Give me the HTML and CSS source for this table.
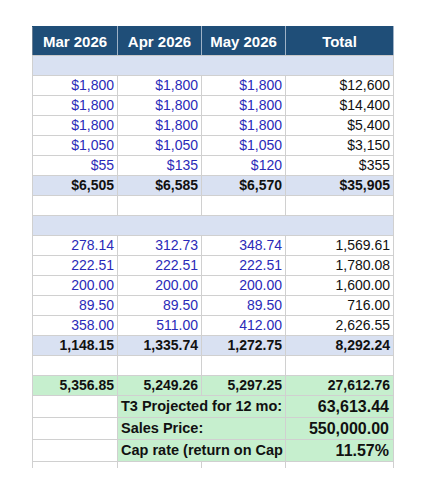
FILE: index.html
```html
<!DOCTYPE html>
<html lang="en">
<head>
  <meta charset="UTF-8">
  <title>Cash Flow Summary</title>
  <meta name="viewport" content="width=device-width, initial-scale=1.0">
  <link rel="stylesheet" href="styles.css">
</head>
<body>
<div class="sheet">
  <table class="grid">
    <colgroup>
      <col class="c-month">
      <col class="c-month2">
      <col class="c-month2">
      <col class="c-total">
    </colgroup>
    <thead>
      <tr>
        <th>Mar 2026</th>
        <th>Apr 2026</th>
        <th>May 2026</th>
        <th>Total</th>
      </tr>
    </thead>
    <tbody>
      <tr class="band"><td colspan="4"></td></tr>
      <tr><td class="in">$1,800</td><td class="in">$1,800</td><td class="in">$1,800</td><td>$12,600</td></tr>
      <tr><td class="in">$1,800</td><td class="in">$1,800</td><td class="in">$1,800</td><td>$14,400</td></tr>
      <tr><td class="in">$1,800</td><td class="in">$1,800</td><td class="in">$1,800</td><td>$5,400</td></tr>
      <tr><td class="in">$1,050</td><td class="in">$1,050</td><td class="in">$1,050</td><td>$3,150</td></tr>
      <tr><td class="in">$55</td><td class="in">$135</td><td class="in">$120</td><td>$355</td></tr>
      <tr class="sum"><td>$6,505</td><td>$6,585</td><td>$6,570</td><td>$35,905</td></tr>
      <tr><td></td><td></td><td></td><td></td></tr>
      <tr class="band"><td colspan="4"></td></tr>
      <tr><td class="in">278.14</td><td class="in">312.73</td><td class="in">348.74</td><td>1,569.61</td></tr>
      <tr><td class="in">222.51</td><td class="in">222.51</td><td class="in">222.51</td><td>1,780.08</td></tr>
      <tr><td class="in">200.00</td><td class="in">200.00</td><td class="in">200.00</td><td>1,600.00</td></tr>
      <tr><td class="in">89.50</td><td class="in">89.50</td><td class="in">89.50</td><td>716.00</td></tr>
      <tr><td class="in">358.00</td><td class="in">511.00</td><td class="in">412.00</td><td>2,626.55</td></tr>
      <tr class="sum"><td>1,148.15</td><td>1,335.74</td><td>1,272.75</td><td>8,292.24</td></tr>
      <tr><td></td><td></td><td></td><td></td></tr>
      <tr class="net"><td>5,356.85</td><td>5,249.26</td><td>5,297.25</td><td>27,612.76</td></tr>
      <tr class="kpi"><td></td><td class="label" colspan="2">T3 Projected for 12 mo:</td><td class="big">63,613.44</td></tr>
      <tr class="kpi"><td></td><td class="label" colspan="2">Sales Price:</td><td class="big">550,000.00</td></tr>
      <tr class="kpi"><td></td><td class="label" colspan="2">Cap rate (return on Cap</td><td class="big">11.57%</td></tr>
      <tr class="stub"><td></td><td></td><td></td><td></td></tr>
    </tbody>
  </table>
</div>
</body>
</html>
```

FILE: styles.css
```css
body { margin: 0; background: #fff; font-family: "Liberation Sans", Arial, sans-serif; }
.sheet { padding: 26px 0 0 32px; }

.grid { border-collapse: collapse; table-layout: fixed; width: 361px; }
.grid .c-month { width: 85px; }
.grid .c-month2 { width: 84px; }
.grid .c-total { width: 108px; }

.grid th { background: #1f4e78; color: #fff; font-size: 15px; font-weight: bold; height: 28px; padding: 0; text-align: center;
  border-left: 1px solid #9fb2c6; border-right: 1px solid #9fb2c6; border-top: 1px solid #1f4e78; border-bottom: 1px solid #c8c8c8; }
.grid th:first-child { border-left-color: #6b7f93; }

.grid td { border: 1px solid #d0d0d0; height: 19px; padding: 0 3px 0 2px; font-size: 14px; text-align: right; color: #111; white-space: nowrap; line-height: 19px; }
.grid td.in { color: #2a2ab8; }

.grid .band td { background: #d9e1f2; }
.grid .sum td { background: #d9e1f2; font-weight: bold; }
.grid .net td { background: #c6efce; font-weight: bold; }

.grid .kpi td { height: 21px; line-height: 21px; }
.grid .kpi td.label { background: #c6efce; text-align: left; font-weight: bold; font-size: 14.5px; padding: 0 0 0 3px; }
.grid .kpi td.big { background: #c6efce; font-weight: bold; font-size: 16px; padding-right: 4px; }

.grid .stub td { height: 6px; border-bottom: none; line-height: 6px; }
```
